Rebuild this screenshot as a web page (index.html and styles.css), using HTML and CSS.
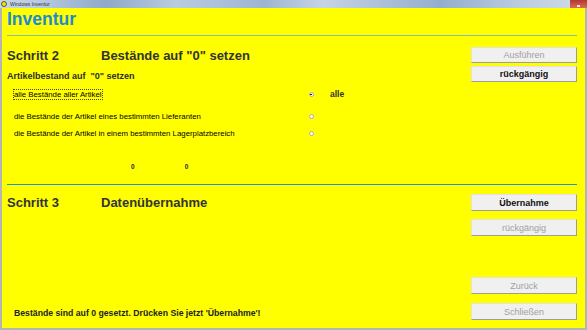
FILE: index.html
```html
<!DOCTYPE html>
<html lang="de">
<head>
<meta charset="UTF-8">
<meta name="viewport" content="width=device-width, initial-scale=1.0">
<title>Windows Inventur</title>
<link rel="stylesheet" href="styles.css">
</head>
<body>

<div class="window">
  <div class="titlebar">
    <span class="app-icon"></span>
    <span class="app-title">Windows Inventur</span>
    <span class="close-btn"></span>
  </div>

  <div class="frame">
    <h1 class="heading">Inventur</h1>
    <div class="rule rule-green"></div>

    <section class="step step-two">
      <div class="step-main">
        <div class="step-title">
          <span class="step-no">Schritt 2</span>
          <span>Bestände auf "0" setzen</span>
        </div>
        <div class="subtitle">Artikelbestand auf&nbsp; "0" setzen</div>

        <div class="option opt-1">
          <span class="option-text"><span class="focus">alle Bestände aller Artikel</span></span>
          <span class="radio checked"></span>
          <span class="radio-label">alle</span>
        </div>
        <div class="option opt-2">
          <span class="option-text">die Bestände der Artikel eines bestimmten Lieferanten</span>
          <span class="radio"></span>
        </div>
        <div class="option opt-3">
          <span class="option-text">die Bestände der Artikel in einem bestimmten Lagerplatzbereich</span>
          <span class="radio"></span>
        </div>

        <div class="counts"><span>0</span><span>0</span></div>
      </div>
      <div class="actions">
        <button class="btn" disabled>Ausführen</button>
        <button class="btn">rückgängig</button>
      </div>
    </section>

    <div class="rule rule-blue"></div>

    <section class="step step-three">
      <div class="step-main">
        <div class="step-title">
          <span class="step-no">Schritt 3</span>
          <span>Datenübernahme</span>
        </div>
        <div class="message">Bestände sind auf 0 gesetzt. Drücken Sie jetzt 'Übernahme'!</div>
      </div>
      <div class="actions">
        <button class="btn tall">Übernahme</button>
        <button class="btn tall" disabled>rückgängig</button>
        <div class="nav-buttons">
          <button class="btn tall" disabled>Zurück</button>
          <button class="btn tall" disabled>Schließen</button>
        </div>
      </div>
    </section>
  </div>
</div>

</body>
</html>
```

FILE: styles.css
```css
body {
  margin: 0;
  padding: 0;
  font-family: 'Liberation Sans', Arial, sans-serif;
  color: #2b2b2b;
}
.window {
  width: 587px;
  height: 330px;
  display: flex;
  flex-direction: column;
  overflow: hidden;
}
.titlebar {
  height: 8px;
  display: flex;
  align-items: center;
  position: relative;
  background: linear-gradient(to right, #c9d7e6 0, #b3c7de 8%, #8fa9c8 18%, #b9cbe0 30%, #9db5d2 45%, #c6d4e5 55%, #93aecd 75%, #bfcfe2 90%, #d0dbe8 100%);
}
.app-icon {
  width: 6px;
  height: 6px;
  margin-left: 1px;
  border-radius: 50%;
  background: #f2e600;
  border: 1px solid #555;
  box-sizing: border-box;
}
.app-title {
  margin-left: 3px;
  font-size: 5px;
  line-height: 8px;
  color: #333;
}
.close-btn {
  position: absolute;
  right: 0;
  top: 0;
  width: 17px;
  height: 8px;
  background: linear-gradient(#b2382c, #d86a5c);
}
.close-btn::after {
  content: "";
  position: absolute;
  left: 7px;
  top: 5px;
  width: 3px;
  height: 2px;
  background: #f4e8e6;
}
.frame {
  flex: 1;
  display: flex;
  flex-direction: column;
  background: #ffff00;
  border: 2px solid #b5b5b5;
  border-top: none;
  padding: 0 8px 0 5px;
}
.heading {
  margin: 1px 0 0 0;
  font-size: 17.5px;
  line-height: 20px;
  font-weight: bold;
  color: #1c8ad4;
}
.rule {
  height: 1px;
}
.rule-green {
  margin-top: 6px;
  background: #86bea6;
}
.rule-blue {
  margin-top: 12px;
  background: #2194d6;
}
.step {
  display: grid;
  grid-template-columns: 1fr 106px;
}
.step-two {
  padding-top: 11px;
}
.step-three {
  flex: 1;
  padding: 9px 0 8px 0;
}
.step-main {
  display: flex;
  flex-direction: column;
}
.step-title {
  display: flex;
  font-size: 13px;
  line-height: 18px;
  font-weight: bold;
  color: #333;
}
.step-no {
  width: 94px;
}
.subtitle {
  margin-top: 5px;
  font-size: 9px;
  line-height: 12px;
  font-weight: bold;
}
.option {
  display: flex;
  align-items: center;
  height: 12px;
  padding-left: 7px;
  font-size: 7.8px;
  color: #000;
}
.opt-1 { margin-top: 6px; }
.opt-2 { margin-top: 10px; }
.opt-3 { margin-top: 5px; }
.option-text {
  width: 295px;
  white-space: nowrap;
}
.focus {
  outline: 1px dotted #444;
}
.radio {
  width: 5px;
  height: 5px;
  box-sizing: border-box;
  border-radius: 50%;
  background: #fff;
  border: 1px solid #aaa;
  position: relative;
}
.radio.checked::after {
  content: "";
  position: absolute;
  left: 0;
  top: 1px;
  width: 2px;
  height: 1px;
  background: #111;
}
.radio-label {
  margin-left: 16px;
  font-size: 8.5px;
  font-weight: bold;
  color: #333;
}
.counts {
  margin-top: 23px;
  padding-left: 124px;
  display: flex;
  gap: 50px;
  font-size: 6.5px;
  line-height: 10px;
  font-weight: bold;
}
.message {
  margin-top: auto;
  margin-bottom: 1px;
  padding-left: 7px;
  font-size: 8.7px;
  line-height: 12px;
  font-weight: bold;
  color: #222;
}
.actions {
  display: flex;
  flex-direction: column;
}
.step-two .actions {
  gap: 3px;
}
.step-three .actions {
  gap: 8px;
}
.nav-buttons {
  margin-top: auto;
  display: flex;
  flex-direction: column;
  gap: 9px;
}
.btn {
  width: 106px;
  height: 16px;
  margin: 0;
  padding: 0;
  background: #f0f0f0;
  border: 1px solid #e2e2e2;
  border-right-color: #9d9d9d;
  border-bottom-color: #9d9d9d;
  font-family: 'Liberation Sans', Arial, sans-serif;
  font-size: 9px;
  font-weight: bold;
  color: #111;
}
.btn.tall {
  height: 17px;
}
.btn:disabled {
  font-weight: normal;
  color: #a0a0a0;
}
```
